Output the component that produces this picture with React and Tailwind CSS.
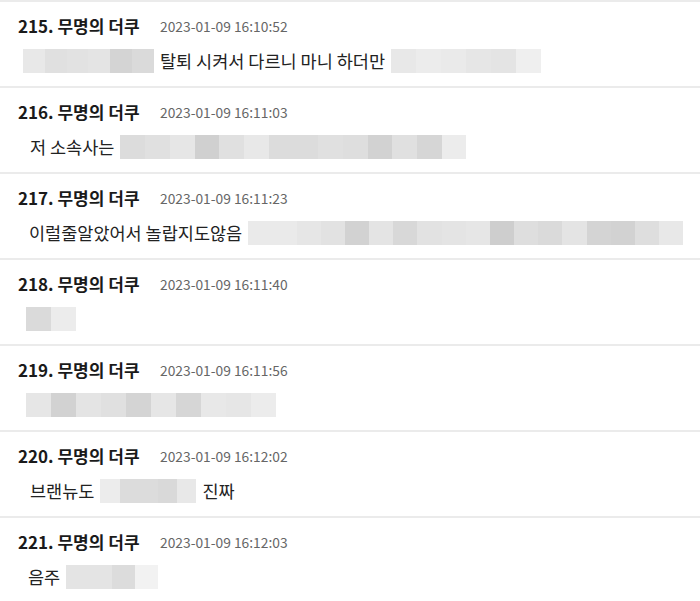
const rows = [
  {
    no: 215,
    time: "2023-01-09 16:10:52",
    pl: "pl-[23px]",
    body: [
      { blur: ["#e8e8e8", "#e0e0e0", "#e2e2e2", "#e4e4e4", "#d4d4d4", "#dadada"], w: 131 },
      { text: "탈퇴 시켜서 다르니 마니 하더만" },
      { blur: ["#e8e8e8", "#ececec", "#eaeaea", "#e6e6e6", "#e4e4e4", "#efefef"], w: 150 },
    ],
  },
  {
    no: 216,
    time: "2023-01-09 16:11:03",
    pl: "pl-[30px]",
    body: [
      { text: "저 소속사는" },
      {
        blur: ["#dcdcdc", "#e0e0e0", "#e6e6e6", "#d0d0d0", "#e0e0e0", "#e8e8e8", "#dcdcdc", "#dcdcdc", "#e0e0e0", "#dedede", "#d2d2d2", "#e0e0e0", "#d6d6d6", "#ececec"],
        w: 346,
      },
    ],
  },
  {
    no: 217,
    time: "2023-01-09 16:11:23",
    pl: "pl-[29px]",
    body: [
      { text: "이럴줄알았어서 놀랍지도않음" },
      {
        blur: ["#eaeaea", "#eaeaea", "#e6e6e6", "#e2e2e2", "#d2d2d2", "#e4e4e4", "#d8d8d8", "#e2e2e2", "#e4e4e4", "#e6e6e6", "#cecece", "#dedede", "#dadada", "#e4e4e4", "#d4d4d4", "#d2d2d2", "#dedede", "#e8e8e8"],
        w: 435,
      },
    ],
  },
  {
    no: 218,
    time: "2023-01-09 16:11:40",
    pl: "pl-[26px]",
    body: [{ blur: ["#dadada", "#ececec"], w: 50 }],
  },
  {
    no: 219,
    time: "2023-01-09 16:11:56",
    pl: "pl-[26px]",
    body: [
      {
        blur: ["#e6e6e6", "#d2d2d2", "#e4e4e4", "#e0e0e0", "#d4d4d4", "#e6e6e6", "#d6d6d6", "#e8e8e8", "#e6e6e6", "#ececec"],
        w: 250,
      },
    ],
  },
  {
    no: 220,
    time: "2023-01-09 16:12:02",
    pl: "pl-[30px]",
    body: [
      { text: "브랜뉴도" },
      { blur: ["#ececec", "#dcdcdc", "#dcdcdc", "#d9d9d9", "#e8e8e8"], w: 96 },
      { text: "진짜" },
    ],
  },
  {
    no: 221,
    time: "2023-01-09 16:12:03",
    pl: "pl-[28px]",
    body: [
      { text: "음주" },
      { blur: ["#e4e4e4", "#e4e4e4", "#dcdcdc", "#f2f2f2"], w: 92 },
    ],
  },
];

const Blur = ({ colors, w }) => (
  <span className="flex h-[24px] overflow-hidden" style={{ width: w }}>
    {colors.map((c, i) => (
      <span
        key={i}
        className="h-full flex-1"
        style={{ backgroundColor: c }}
      />
    ))}
  </span>
);

const Comment = ({ row }) => (
  <div className="border-b-2 border-[#ebebeb] pt-[13px] pb-[13px]">
    <div className="flex items-center pl-[18px] h-[22px]">
      <span className="text-[17px] font-bold text-[#1a1a1a] w-[142px] whitespace-nowrap">
        {row.no}. 무명의 더쿠
      </span>
      <span className="text-[13.8px] text-[#666] whitespace-nowrap">
        {row.time}
      </span>
    </div>
    <div className={`flex items-center gap-[6px] mt-[12px] h-[24px] ${row.pl}`}>
      {row.body.map((b, i) =>
        b.text ? (
          <span key={i} className="text-[17.5px] text-[#222] whitespace-nowrap">
            {b.text}
          </span>
        ) : (
          <Blur key={i} colors={b.blur} w={b.w} />
        )
      )}
    </div>
  </div>
);

export default function App() {
  return (
    <div
      className="w-[700px] h-[601px] overflow-hidden bg-white border-t-2 border-[#ebebeb]"
      style={{ fontFamily: '"Noto Sans CJK KR", "Noto Sans", sans-serif' }}
    >
      {rows.map((row) => (
        <Comment key={row.no} row={row} />
      ))}
    </div>
  );
}
